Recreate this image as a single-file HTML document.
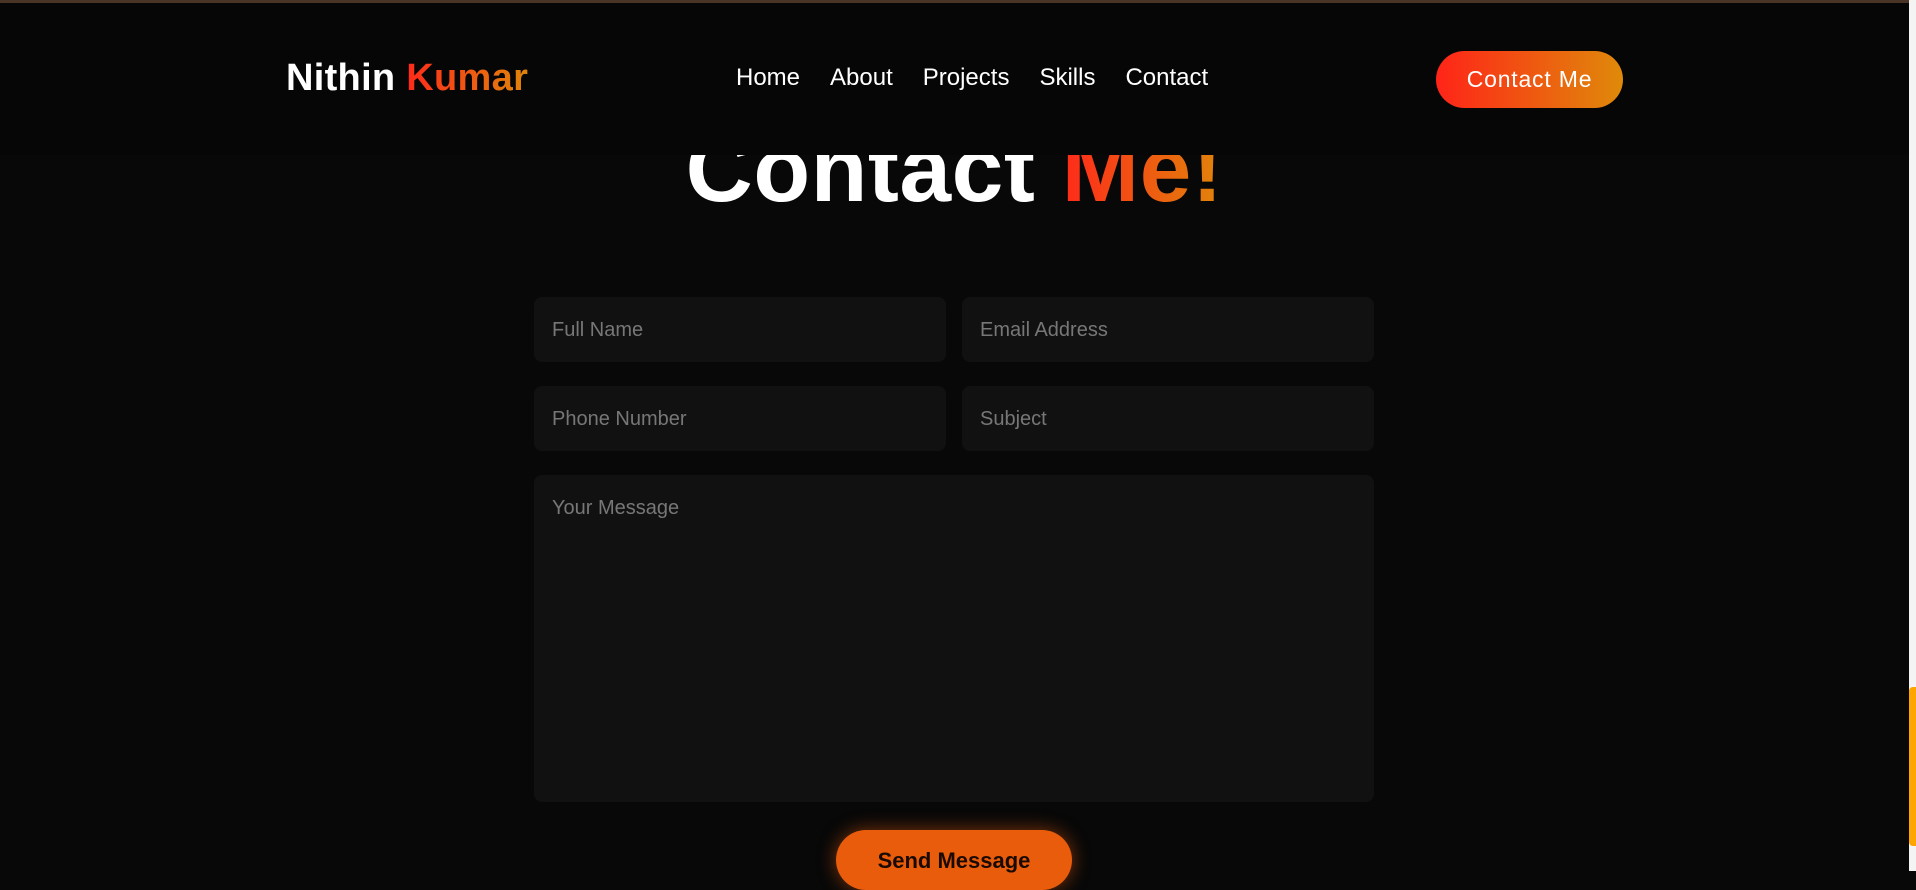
<!DOCTYPE html>
<html><head><meta charset="utf-8"><style>
*{margin:0;padding:0;box-sizing:border-box}
html,body{width:1916px;height:871px;overflow:hidden;background:#080808;font-family:"Liberation Sans",sans-serif}
.topline{position:absolute;left:0;top:0;width:1909px;height:3px;background:#4a3426;z-index:20}
.sb{position:absolute;left:1909px;top:0;width:7px;height:871px;background:#f4f4f4}
.thumb{position:absolute;left:1909px;top:687px;width:7px;height:159px;background:#ffa500;border-radius:4px 0 0 4px}
header{position:absolute;left:0;top:0;width:1909px;height:155px;background:#060606;z-index:10}
.logo{position:absolute;left:286px;top:57px;font-size:38px;font-weight:700;color:#fff;letter-spacing:0.3px}
.grad{background:linear-gradient(90deg,#ff2a1a,#e0850a);-webkit-background-clip:text;background-clip:text;color:transparent}
nav{position:absolute;left:736px;top:64px;font-size:24px;color:#fff}
nav span{margin-right:30px}
.cbtn{position:absolute;left:1436px;top:51px;width:187px;height:57px;border-radius:29px;background:linear-gradient(90deg,#ff2418,#df8a0a);color:#fff;font-size:23px;display:flex;align-items:center;justify-content:center;letter-spacing:.8px}
h1{position:absolute;left:0;width:1909px;top:119px;text-align:center;font-size:93px;font-weight:800;color:#fff;letter-spacing:0.5px;line-height:100px}
.in{position:absolute;background:#111;border-radius:8px;color:#777;font-size:20px;padding:22px 18px}
.send{position:absolute;left:836px;top:830px;width:236px;height:60px;border-radius:30px;background:#e95c0c;box-shadow:0 0 18px #e95c0c88;color:#1a0a00;font-weight:700;font-size:22px;text-align:center;padding-top:18px}
</style></head><body>
<div class="topline"></div>
<h1>Contact <span class="grad">Me!</span></h1>
<header>
<div class="logo">Nithin <span class="grad">Kumar</span></div>
<nav><span>Home</span><span>About</span><span>Projects</span><span>Skills</span><span style="margin:0">Contact</span></nav>
<div class="cbtn">Contact Me</div>
</header>
<div class="in" style="left:534px;top:297px;width:412px;height:65px">Full Name</div>
<div class="in" style="left:962px;top:297px;width:412px;height:65px">Email Address</div>
<div class="in" style="left:534px;top:386px;width:412px;height:65px">Phone Number</div>
<div class="in" style="left:962px;top:386px;width:412px;height:65px">Subject</div>
<div class="in" style="left:534px;top:475px;width:840px;height:327px">Your Message</div>
<div class="send">Send Message</div>
<div class="sb"></div><div class="thumb"></div>
</body></html>
